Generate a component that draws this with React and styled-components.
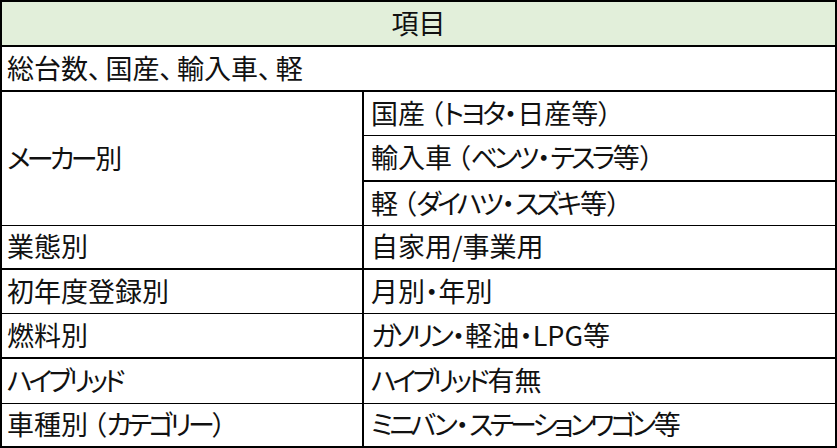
import React from "react";
import styled, { createGlobalStyle } from "styled-components";

const Global = createGlobalStyle`
  html, body { margin: 0; padding: 0; background: #ffffff; }
  body { font-family: "Noto Sans CJK JP", "Noto Sans", sans-serif; }
  * { box-sizing: border-box; }
`;

const Sheet = styled.div`
  width: 837px;
  display: grid;
  grid-template-columns: 362px 1fr;
  grid-template-rows: 45px 45px 44px 46px 44px 44px 44px 45px 45px 44px;
  border-top: 2px solid #000;
  border-left: 2px solid #000;
  font-family: "Noto Sans CJK JP", sans-serif;
  font-feature-settings: "palt";
  color: #111;
`;

const Cell = styled.div`
  display: flex;
  align-items: center;
  padding: 0 0 3px ${(p) => (p.$right ? 7 : 5)}px;
  font-size: 27px;
  line-height: 1;
  white-space: nowrap;
  border-right: 2px solid #000;
  border-bottom: ${(p) => p.$line}px solid #000;
  grid-column: ${(p) => p.$col || "auto"};
  grid-row: ${(p) => p.$row || "auto"};
`;

const Header = styled(Cell)`
  grid-column: 1 / -1;
  justify-content: center;
  padding: 0 0 3px 0;
  background: #e2efda;
`;

const Full = styled(Cell)`
  grid-column: 1 / -1;
`;

const Kana = styled.span`
  letter-spacing: -0.14em;
  margin-right: 0.06em;
`;

const Paren = styled.span`
  margin-left: 0.18em;
`;

const Comma = styled.span`
  margin-right: 0.15em;
`;

const KANA_RUN = /([\u3041-\u309F\u30A1-\u30FA\u30FC-\u30FF]+|（|、)/;

function Label({ text }) {
  return text.split(KANA_RUN).map((part, i) => {
    if (i % 2 === 0) return part;
    if (part === "（") return <Paren key={i}>{part}</Paren>;
    if (part === "、") return <Comma key={i}>{part}</Comma>;
    return <Kana key={i}>{part}</Kana>;
  });
}

const rows = [
  { label: "業態別", value: "自家用/事業用", line: 2 },
  { label: "初年度登録別", value: "月別・年別", line: 1 },
  { label: "燃料別", value: "ガソリン・軽油・LPG等", line: 2 },
  { label: "ハイブリッド", value: "ハイブリッド有無", line: 1 },
  { label: "車種別（カテゴリー）", value: "ミニバン・ステーションワゴン等", line: 2 },
];

const makers = [
  { value: "国産（トヨタ・日産等）", line: 1 },
  { value: "輸入車（ベンツ・テスラ等）", line: 2 },
  { value: "軽（ダイハツ・スズキ等）", line: 1 },
];

export default function App() {
  return (
    <>
      <Global />
      <Sheet>
        <Header $line={2}>項目</Header>
        <Full $line={2}>
          <Label text="総台数、国産、輸入車、軽" />
        </Full>
        <Cell $line={1} $row="span 3">
          <Label text="メーカー別" />
        </Cell>
        {makers.map((m) => (
          <Cell key={m.value} $right $line={m.line} $col="2">
            <Label text={m.value} />
          </Cell>
        ))}
        {rows.map((r) => (
          <React.Fragment key={r.label}>
            <Cell $line={r.line}>
              <Label text={r.label} />
            </Cell>
            <Cell $right $line={r.line}>
              <Label text={r.value} />
            </Cell>
          </React.Fragment>
        ))}
      </Sheet>
    </>
  );
}
